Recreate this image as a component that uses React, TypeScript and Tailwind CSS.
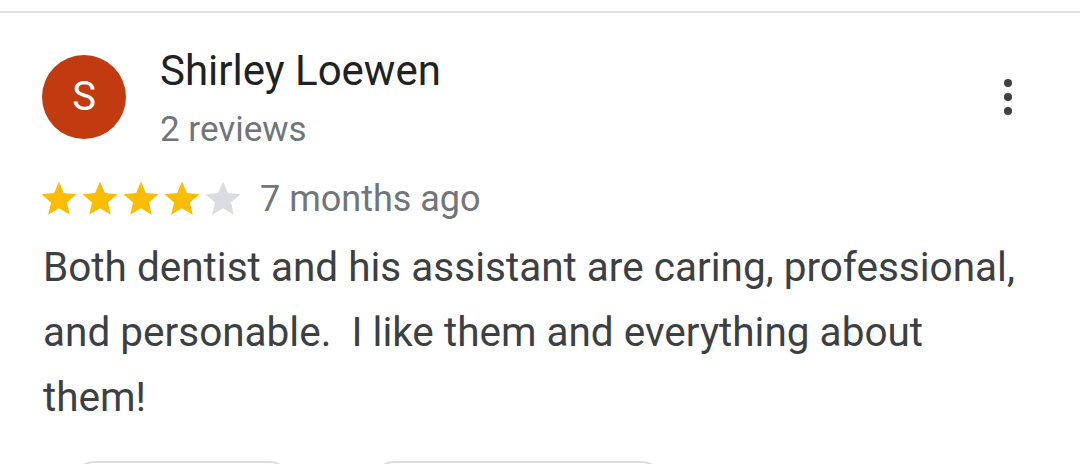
import React from "react";

const Star = ({ filled }: { filled: boolean }) => (
  <svg width="42" height="42" viewBox="0 0 24 24" className="-mr-[1px] shrink-0">
    <path
      d="M12 17.27L18.18 21l-1.64-7.03L22 9.24l-7.19-.61L12 2 9.19 8.63 2 9.24l5.46 4.73L5.82 21z"
      fill={filled ? "#fbbc04" : "#dadce0"}
    />
  </svg>
);

export default function App() {
  return (
    <div
      className="relative h-[464px] w-[1080px] overflow-hidden bg-white"
      style={{ fontFamily: "Roboto, 'Noto Sans', sans-serif" }}
    >
      <div className="mt-[11px] h-[2px] w-full bg-[#e3e3e3]" />
      <div className="flex items-start pl-[42px] pr-[68px] pt-[37px]">
        <div className="mt-[5px] flex h-[84px] w-[84px] shrink-0 items-center justify-center rounded-full bg-[#c23a10] text-[40px] leading-none text-white">
          S
        </div>
        <div className="ml-[34px] flex flex-col">
          <div className="text-[42px] leading-[42px] text-[#202124]">Shirley Loewen</div>
          <div className="mt-[20px] text-[35px] leading-[35px] text-[#70757a]">2 reviews</div>
        </div>
        <div className="ml-auto mt-[29px] flex flex-col items-center gap-[6px]">
          <span className="h-[8px] w-[8px] rounded-full bg-[#3c4043]" />
          <span className="h-[8px] w-[8px] rounded-full bg-[#3c4043]" />
          <span className="h-[8px] w-[8px] rounded-full bg-[#3c4043]" />
        </div>
      </div>
      <div className="mt-[34px] flex h-[36px] items-center pl-[38px]">
        <div className="flex h-[36px] items-center">
          <Star filled />
          <Star filled />
          <Star filled />
          <Star filled />
          <Star filled={false} />
        </div>
        <span className="ml-[17px] text-[36px] leading-[36px] text-[#70757a]">7 months ago</span>
      </div>
      <div className="mt-[18px] pl-[43px] text-[40.5px] leading-[65px] text-[#3c4043]">
        Both dentist and his assistant are caring, professional,
        <br />
        and personable.{"\u00a0 "}I like them and everything about
        <br />
        them!
      </div>
      <div className="absolute left-[74px] top-[461px] h-[40px] w-[216px] rounded-full border-2 border-[#dadce0] bg-white" />
      <div className="absolute left-[374px] top-[461px] h-[40px] w-[288px] rounded-full border-2 border-[#dadce0] bg-white" />
    </div>
  );
}
